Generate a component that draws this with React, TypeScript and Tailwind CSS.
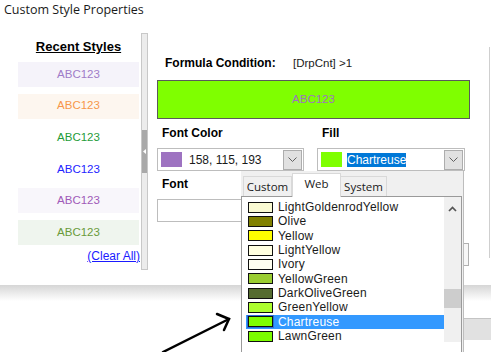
import React from 'react';

const sans = "font-['Liberation_Sans',Arial,sans-serif]";

const recentStyles = [
  { id: 1, cls: 'text-[#a07cc8] bg-[#f5f3fa]' },
  { id: 2, cls: 'text-[#f7964a] bg-[#fdf6ef]' },
  { id: 3, cls: 'text-[#1f9c3a] bg-white' },
  { id: 4, cls: 'text-[#2323ff] bg-white' },
  { id: 5, cls: 'text-[#a05ab8] bg-[#f8f6fb]' },
  { id: 6, cls: 'text-[#6a9a3a] bg-[#eff5ee]' },
];

const webColors = [
  { name: 'LightGoldenrodYellow', swatch: 'bg-[#fafad2]' },
  { name: 'Olive', swatch: 'bg-[#808000]' },
  { name: 'Yellow', swatch: 'bg-[#ffff00]' },
  { name: 'LightYellow', swatch: 'bg-[#ffffe0]' },
  { name: 'Ivory', swatch: 'bg-[#fffff0]' },
  { name: 'YellowGreen', swatch: 'bg-[#9acd32]' },
  { name: 'DarkOliveGreen', swatch: 'bg-[#556b2f]' },
  { name: 'GreenYellow', swatch: 'bg-[#adff2f]' },
  { name: 'Chartreuse', swatch: 'bg-[#7fff00]' },
  { name: 'LawnGreen', swatch: 'bg-[#7cfc00]' },
];

const DropButton = () => (
  <div className="w-[19px] h-[20px] mr-[1px] border border-[#adadad] bg-[#e1e1e1] flex items-center justify-center">
    <svg width="9" height="5" viewBox="0 0 9 5">
      <path d="M0.5 0.5 L4.5 4.5 L8.5 0.5" stroke="#606060" fill="none" />
    </svg>
  </div>
);

const ColorPopup = () => (
  <div className={`absolute left-[241px] top-[171px] w-[223px] h-[181px] bg-[#f0f0f0] border-r border-[#bdbdbd] flex flex-col ${sans}`}>
    {/* tabs */}
    <div className="h-[25px] flex items-end pl-[2px] font-['Open_Sans',sans-serif] text-[11.5px] text-[#1a1a1a]">
      <div className="h-[20px] w-[49px] border border-b-0 border-[#d9d9d9] bg-[#f0f0f0] flex items-center justify-center">Custom</div>
      <div className="relative z-10 -mb-[1px] h-[24px] w-[49px] border border-b-0 border-[#d9d9d9] bg-white flex items-center justify-center pb-[3px]">Web</div>
      <div className="h-[20px] w-[46px] border border-b-0 border-l-0 border-[#d9d9d9] bg-[#f0f0f0] flex items-center justify-center">System</div>
    </div>
    {/* list */}
    <div className="flex-1 w-[221px] border border-b-0 border-[#9a9a9a] bg-white flex overflow-hidden">
      <div className="flex-1 pt-[3px] pl-[4px]">
        {webColors.map((c) => {
          const sel = c.name === 'Chartreuse';
          return (
            <div
              key={c.name}
              className={`h-[14.33px] flex items-center pl-[2px] text-[12px] leading-[14px] tracking-[0.2px] ${sel ? 'bg-[#3399ff] text-white' : 'text-[#1a1a1a]'}`}
            >
              <div className={`w-[25px] h-[11px] border ${sel ? 'border-[#101010] outline outline-1 outline-[#2b6fd6]' : 'border-[#101010]'} ${c.swatch}`} />
              <span className="ml-[5px]">{c.name}</span>
            </div>
          );
        })}
      </div>
      <div className="w-[17px] h-[145px] bg-[#f0f0f0] flex flex-col items-center">
        <div className="mt-[9px]">
          <svg width="9" height="6" viewBox="0 0 9 6">
            <path d="M1 5 L4.5 1.5 L8 5" stroke="#555" strokeWidth="1.7" fill="none" />
          </svg>
        </div>
        <div className="mt-[77px] w-full h-[19px] bg-[#cdcdcd]" />
      </div>
    </div>
  </div>
);

export default function App() {
  return (
    <div className={`relative w-[491px] h-[352px] overflow-hidden bg-white ${sans}`}>
      {/* dialog */}
      <div className="h-[285px] flex flex-col">
        <div className="h-[33px] pl-[4px] font-['Open_Sans',sans-serif] text-[12.5px] leading-[20px] text-[#1a1a1a]">
          Custom Style Properties
        </div>
        <div className="flex-1 flex">
          {/* recent styles */}
          <div className="w-[141px] pl-[18px] pr-[2px] flex flex-col">
            <div className="mt-[6px] text-center text-[13px] leading-[16px] font-bold underline text-black">Recent Styles</div>
            <div className="mt-[7px] flex flex-col gap-[6.6px]">
              {recentStyles.map((s) => (
                <div key={s.id} className={`h-[25px] flex items-center justify-center text-[11.5px] ${s.cls}`}>
                  ABC123
                </div>
              ))}
            </div>
            <div className="mt-[4px] -mr-[1px] text-right text-[12px] leading-[15px] text-[#1a1aff] underline">(Clear All)</div>
          </div>

          {/* splitter */}
          <div className="w-[7px] h-[237px] border border-[#c8c8c8] bg-[#ececec] flex flex-col">
            <div className="mt-[96px] h-[43px] bg-[#a9a9a9] flex items-center justify-center">
              <svg width="3" height="5" viewBox="0 0 3 5">
                <path d="M3 0 L0 2.5 L3 5 Z" fill="#fff" />
              </svg>
            </div>
          </div>

          {/* editor */}
          <div className="pl-[9px] flex flex-col">
            <div className="mt-[23px] flex items-baseline leading-[15px]">
              <span className="ml-[8px] w-[128px] text-[12px] font-bold text-black">Formula Condition:</span>
              <span className="text-[11.5px] text-[#1a1a1a]">[DrpCnt] &gt;1</span>
            </div>
            <div className="mt-[9px] w-[313px] h-[39px] border border-[#5a5a5a] bg-[#7fff00] flex items-center justify-center text-[11.5px] text-[#9e73c1]">
              ABC123
            </div>
            <div className="mt-[7px] grid grid-cols-[147px_148px] gap-x-[13px] text-[12px] leading-[15px] font-bold text-black">
              <div className="pl-[5px]">Font Color</div>
              <div className="pl-[5px]">Fill</div>
            </div>
            <div className="mt-[7px] grid grid-cols-[147px_148px] gap-x-[13px] text-[12px] text-[#1a1a1a]">
              <div className="h-[23px] border border-[#bdbdbd] bg-white flex items-center pl-[3px]">
                <div className="w-[21px] h-[15px] bg-[#9e73c1]" />
                <span className="ml-[7px] flex-1">158, 115, 193</span>
                <DropButton />
              </div>
              <div className="h-[23px] border border-[#bdbdbd] bg-white flex items-center pl-[3px]">
                <div className="w-[21px] h-[15px] bg-[#7fff00]" />
                <div className="ml-[5px] flex-1">
                  <span className="inline-block h-[14px] leading-[14px] bg-[#0078d7] text-white">Chartreuse</span>
                </div>
                <DropButton />
              </div>
            </div>
            <div className="mt-[6px] pl-[5px] text-[12px] leading-[15px] font-bold text-black">Font</div>
            <div className="mt-[7px] w-[147px] h-[23px] border border-[#bdbdbd] bg-white" />
            <div className="mt-[21px] w-[313px] flex justify-end">
              <div className="w-[50px] h-[23px] mr-[1px] border border-[#b0b0b0] bg-[#f7f7f7]" />
            </div>
          </div>

          <div className="ml-auto mr-[1px] mt-[14px] w-[1px] h-[211px] bg-[#cfcfcf]" />
        </div>
      </div>

      {/* drop shadow and the window behind */}
      <div className="h-[16px] bg-gradient-to-b from-[#d6d6d6] to-white" />
      <div className="mt-[17px] flex justify-end">
        <div className="w-[28px] h-[22px] bg-[#e1e1e1] border-t border-[#c4c4c4]" />
      </div>

      <ColorPopup />

      {/* annotation arrow */}
      <svg className="absolute left-0 top-0" width="491" height="352" viewBox="0 0 491 352">
        <g stroke="#000" strokeWidth="2.5" strokeLinecap="round" fill="none">
          <path d="M163 352 L229 319" />
          <path d="M217 314 L229 319 L224 330" />
        </g>
      </svg>
    </div>
  );
}
